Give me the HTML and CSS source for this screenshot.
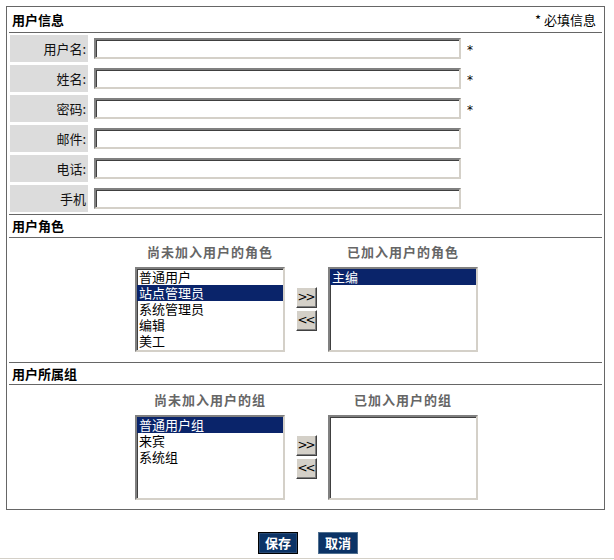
FILE: index.html
```html
<!DOCTYPE html>
<html lang="zh-CN">
<head>
    <meta charset="UTF-8">
    <meta name="viewport" content="width=device-width, initial-scale=1.0">
    <title>用户信息</title>
    <link rel="stylesheet" href="styles.css">
</head>
<body>
    <div class="panel">
        <div class="section-head head-info">
            <span class="section-title">用户信息</span>
            <span class="required-note">* 必填信息</span>
        </div>

        <div class="fields">
            <div class="field-row">
                <label class="field-label" for="username">用户名:</label>
                <input class="field-input" id="username" type="text">
                <span class="req">*</span>
            </div>
            <div class="field-row">
                <label class="field-label" for="realname">姓名:</label>
                <input class="field-input" id="realname" type="text">
                <span class="req">*</span>
            </div>
            <div class="field-row">
                <label class="field-label" for="password">密码:</label>
                <input class="field-input" id="password" type="password">
                <span class="req">*</span>
            </div>
            <div class="field-row">
                <label class="field-label" for="email">邮件:</label>
                <input class="field-input" id="email" type="text">
            </div>
            <div class="field-row">
                <label class="field-label" for="phone">电话:</label>
                <input class="field-input" id="phone" type="text">
            </div>
            <div class="field-row">
                <label class="field-label" for="mobile">手机</label>
                <input class="field-input" id="mobile" type="text">
            </div>
        </div>

        <div class="section-head head-role">
            <span class="section-title">用户角色</span>
        </div>

        <div class="picker picker-role">
            <div class="picker-col">
                <div class="picker-title">尚未加入用户的角色</div>
                <ul class="listbox">
                    <li>普通用户</li>
                    <li class="selected">站点管理员</li>
                    <li>系统管理员</li>
                    <li>编辑</li>
                    <li>美工</li>
                </ul>
            </div>
            <div class="move-buttons">
                <button class="move-btn" type="button">&gt;&gt;</button>
                <button class="move-btn" type="button">&lt;&lt;</button>
            </div>
            <div class="picker-col">
                <div class="picker-title">已加入用户的角色</div>
                <ul class="listbox">
                    <li class="selected">主编</li>
                </ul>
            </div>
        </div>

        <div class="section-head head-group">
            <span class="section-title">用户所属组</span>
        </div>

        <div class="picker picker-group">
            <div class="picker-col">
                <div class="picker-title">尚未加入用户的组</div>
                <ul class="listbox">
                    <li class="selected">普通用户组</li>
                    <li>来宾</li>
                    <li>系统组</li>
                </ul>
            </div>
            <div class="move-buttons">
                <button class="move-btn" type="button">&gt;&gt;</button>
                <button class="move-btn" type="button">&lt;&lt;</button>
            </div>
            <div class="picker-col">
                <div class="picker-title">已加入用户的组</div>
                <ul class="listbox"></ul>
            </div>
        </div>
    </div>

    <div class="actions">
        <button class="action-btn default" type="submit">保存</button>
        <button class="action-btn" type="button">取消</button>
    </div>

    <div class="page-end"></div>
</body>
</html>
```

FILE: styles.css
```css
/** 基本设置 */
body {
    margin: 0;
    padding-top: 6px;
    background-color: #fff;
    font-family: "Noto Sans CJK SC", "DejaVu Sans", sans-serif;
    font-size: 13px;
    color: #000;
}

* {
    box-sizing: border-box;
}

/** 外框 */
.panel {
    width: 599px;
    margin-left: 6px;
    border: 1px solid #666;
}

/** 分区标题栏 */
.section-head {
    display: flex;
    justify-content: space-between;
    align-items: center;
    margin: 0 2px;
    padding: 0 4px 0 3px;
    border-bottom: 1px solid #666;
    line-height: 16px;
}

.head-info {
    height: 27px;
    border-top: 1px solid transparent;
    margin-top: -1px;
    padding-top: 1px;
}

.head-role {
    height: 24px;
    border-top: 1px solid #666;
}

.head-group {
    height: 23px;
    border-top: 1px solid #666;
}

.section-title {
    font-weight: bold;
}

.required-note {
    padding-right: 2px;
}

/** 表单字段 */
.fields {
    display: flex;
    flex-direction: column;
    gap: 3px;
    padding: 2px 0 2px 3px;
}

.field-row {
    display: flex;
    align-items: center;
    height: 27px;
}

.field-label {
    width: 78px;
    height: 27px;
    line-height: 27px;
    padding-right: 2px;
    text-align: right;
    background-color: #dcdcdc;
    color: #111;
}

.field-input {
    width: 367px;
    height: 21px;
    margin-left: 6px;
    padding: 1px 3px;
    border: 2px solid;
    border-color: #808080 #d4d0c8 #d4d0c8 #808080;
    box-shadow: inset 1px 1px 0 #404040;
    background-color: #fff;
    font: inherit;
    outline: none;
}

.req {
    margin-left: 6px;
    padding-top: 2px;
    font-family: "DejaVu Sans", sans-serif;
    font-size: 12px;
    color: #000;
}

/** 角色、组的左右选择框 */
.picker {
    display: flex;
    justify-content: center;
    align-items: flex-end;
    gap: 11px;
    margin: 0 2px;
    padding-left: 2px;
}

.picker-role {
    padding-top: 6px;
    padding-bottom: 10px;
}

.picker-group {
    padding-top: 7px;
    padding-bottom: 9px;
}

.picker-col {
    display: flex;
    flex-direction: column;
    align-items: center;
    gap: 7px;
}

.picker-title {
    line-height: 16px;
    font-weight: bold;
    letter-spacing: 1px;
    color: #666;
}

.listbox {
    width: 150px;
    height: 85px;
    margin: 0;
    padding: 0;
    list-style: none;
    border: 2px solid;
    border-color: #808080 #d4d0c8 #d4d0c8 #808080;
    box-shadow: inset 1px 1px 0 #404040;
    background-color: #fff;
    overflow: hidden;
}

.listbox li {
    height: 16px;
    line-height: 16px;
    padding-left: 2px;
    white-space: nowrap;
}

.listbox li.selected {
    background-color: #0a246a;
    color: #fff;
}

.move-buttons {
    display: flex;
    flex-direction: column;
    gap: 2px;
    align-self: flex-end;
    margin-bottom: 21px;
}

.move-btn {
    width: 21px;
    height: 21px;
    padding: 0 0 1px;
    border: 1px solid;
    border-color: #fff #404040 #404040 #fff;
    box-shadow: inset -1px -1px 0 #808080;
    background-color: #d4d0c8;
    font-family: "DejaVu Sans", sans-serif;
    font-size: 12px;
    letter-spacing: -2px;
    text-indent: -2px;
    color: #000;
}

/** 保存 / 取消 */
.actions {
    display: flex;
    justify-content: center;
    gap: 20px;
    padding: 22px 0 0 2px;
}

.action-btn {
    width: 40px;
    height: 22px;
    padding: 0;
    border: 1px solid #4f6f8f;
    background-color: #0b3366;
    color: #fff;
    font-family: "Noto Sans CJK SC", sans-serif;
    font-size: 13px;
    font-weight: bold;
    line-height: 18px;
}

.action-btn.default {
    border: 1px solid #000;
    box-shadow: inset 0 0 0 1px #2a4a73;
}

.page-end {
    margin-top: 4px;
    border-top: 1px solid #d4d0c8;
}
```
